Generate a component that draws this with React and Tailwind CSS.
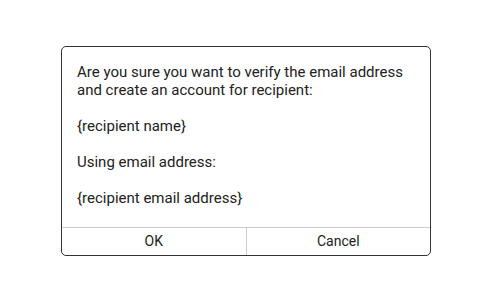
export default function App() {
  return (
    <div className="w-[492px] h-[302px] bg-white relative" style={{ fontFamily: 'Roboto, "Liberation Sans", sans-serif' }}>
      <div className="absolute left-[61px] top-[46px] w-[370px] h-[210px] border border-[#333] rounded-[5px] flex flex-col bg-white">
        <div className="flex-1 pl-[15px] pr-[15px] pt-[16px] text-[15px] leading-[18px] text-[#222]">
          <p>Are you sure you want to verify the email address and create an account for recipient:</p>
          <p className="mt-[18px]">{"{recipient name}"}</p>
          <p className="mt-[18px]">Using email address:</p>
          <p className="mt-[18px]">{"{recipient email address}"}</p>
        </div>
        <div className="h-[28px] border-t border-[#ccc] flex text-[14px] text-[#222]">
          <button className="flex-1 flex items-center justify-center">OK</button>
          <div className="w-px bg-[#ccc]" />
          <button className="flex-1 flex items-center justify-center">Cancel</button>
        </div>
      </div>
    </div>
  );
}
